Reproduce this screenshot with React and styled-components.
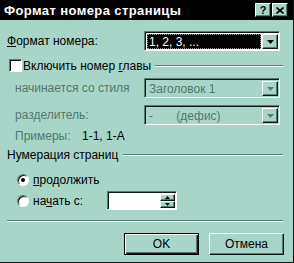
import React from 'react';
import styled, { createGlobalStyle, css } from 'styled-components';

const FACE = '#a7d6c8';
const SHADOW = '#567b73';
const DARK = '#0c1a17';
const LIGHT = '#ffffff';
const DISABLED = '#52766e';

const GlobalStyle = createGlobalStyle`
  html, body {
    margin: 0;
    padding: 0;
    background: ${FACE};
  }
  body {
    font-family: "Liberation Sans", Arial, sans-serif;
    font-size: 12px;
    color: #000;
  }
  * {
    box-sizing: border-box;
  }
`;

const raised = css`
  border: 1px solid;
  border-color: ${LIGHT} ${DARK} ${DARK} ${LIGHT};
  box-shadow: inset -1px -1px 0 ${SHADOW};
`;

const sunken = css`
  border: 1px solid;
  border-color: ${SHADOW} ${LIGHT} ${LIGHT} ${SHADOW};
  box-shadow: inset 1px 1px 0 ${DARK};
`;

const Window = styled.div`
  width: 294px;
  height: 263px;
  background: ${FACE};
  display: flex;
  flex-direction: column;
  border-right: 1px solid ${DARK};
  border-bottom: 1px solid ${DARK};
`;

const TitleBar = styled.div`
  height: 20px;
  flex-shrink: 0;
  background: #000;
  color: #fff;
  display: flex;
  align-items: center;
  padding: 0 5px 0 4px;
  font-family: "Liberation Sans", Arial, sans-serif;
  font-weight: bold;
  font-size: 13px;
  letter-spacing: 0.4px;
`;

const Title = styled.span`
  flex: 1;
  white-space: nowrap;
`;

const CaptionButton = styled.div`
  width: 16px;
  height: 14px;
  background: ${FACE};
  ${raised};
  display: flex;
  align-items: center;
  justify-content: center;
  color: #000;
  font-size: 11px;
  letter-spacing: 0;
  margin-left: ${p => p.$gap || 0}px;
`;

const Content = styled.div`
  flex: 1;
  padding: 0 9px 0 7px;
  display: flex;
  flex-direction: column;
`;

const Row = styled.div`
  display: flex;
  align-items: center;
  margin-top: ${p => p.$mt}px;
  height: ${p => p.$h}px;
  padding-left: ${p => p.$indent || 0}px;
`;

const Label = styled.span`
  width: ${p => (p.$w ? `${p.$w}px` : 'auto')};
  flex-shrink: 0;
  color: ${p => (p.$disabled ? DISABLED : '#000')};
  white-space: nowrap;
`;

const Combo = styled.div`
  width: 136px;
  height: 20px;
  ${sunken};
  padding: 2px 1px 1px 2px;
  display: flex;
  background: ${p => (p.$disabled ? FACE : LIGHT)};
`;

const ComboField = styled.div`
  flex: 1;
  display: flex;
  align-items: center;
  padding-left: 1px;
  white-space: nowrap;
  color: ${p => (p.$disabled ? DISABLED : '#fff')};
  background: ${p => (p.$selected ? '#000' : 'transparent')};
  border: 1px dotted ${p => (p.$selected ? 'rgba(255,255,255,0.6)' : 'transparent')};
  margin-right: 1px;
`;

const DropButton = styled.div`
  width: 16px;
  background: ${FACE};
  ${raised};
  display: flex;
  align-items: center;
  justify-content: center;
`;

const Groove = styled.div`
  flex: 1;
  height: 2px;
  border-top: 1px solid ${SHADOW};
  border-bottom: 1px solid ${LIGHT};
  margin-left: ${p => p.$ml || 0}px;
  margin-right: ${p => p.$mr || 0}px;
`;

const Separator = styled(Groove)`
  flex: none;
  margin-top: ${p => p.$mt}px;
`;

const Checkbox = styled.div`
  width: 13px;
  height: 13px;
  margin: 0 1px 0 2px;
  background: ${LIGHT};
  ${sunken};
`;

const Radio = styled.div`
  position: relative;
  width: 12px;
  height: 12px;
  margin-right: 4px;
  border-radius: 50%;
  background: ${LIGHT};
  border: 1px solid;
  border-color: ${SHADOW} ${LIGHT} ${LIGHT} ${SHADOW};
  box-shadow: inset 1px 1px 0 ${DARK};
  flex-shrink: 0;

  &::after {
    content: '';
    display: ${p => (p.$checked ? 'block' : 'none')};
    position: absolute;
    left: 3px;
    top: 3px;
    width: 4px;
    height: 4px;
    border-radius: 50%;
    background: #000;
  }
`;

const Key = styled.u`
  text-decoration: underline;
`;

const SpinBox = styled.div`
  width: 70px;
  height: 19px;
  ${sunken};
  background: ${LIGHT};
  padding: 2px 1px 1px 2px;
  display: flex;
  justify-content: flex-end;
`;

const SpinButtons = styled.div`
  width: 15px;
  display: flex;
  flex-direction: column;
`;

const SpinButton = styled.div`
  flex: 1;
  background: ${FACE};
  ${raised};
  display: flex;
  align-items: center;
  justify-content: center;
`;

const ButtonRow = styled.div`
  display: flex;
  justify-content: flex-end;
  gap: 10px;
  margin-top: 11px;
`;

const Button = styled.div`
  width: 75px;
  height: 22px;
  background: ${FACE};
  display: flex;
  align-items: center;
  justify-content: center;
  ${p =>
    p.$default
      ? css`
          border: 1px solid #000;
          box-shadow: inset 1px 1px 0 ${LIGHT}, inset -1px -1px 0 ${DARK},
            inset -2px -2px 0 ${SHADOW};
        `
      : raised};
`;

const Arrow = ({ color = '#000', up = false, w = 7, h = 4 }) => (
  <svg width={w} height={h} viewBox={`0 0 ${w} ${h}`}>
    <polygon
      points={up ? `0,${h} ${w},${h} ${w / 2},0` : `0,0 ${w},0 ${w / 2},${h}`}
      fill={color}
    />
  </svg>
);

export default function App() {
  return (
    <>
      <GlobalStyle />
      <Window>
        <TitleBar>
          <Title>Формат номера страницы</Title>
          <CaptionButton>
            <b>?</b>
          </CaptionButton>
          <CaptionButton $gap={1}>
            <svg width="8" height="7" viewBox="0 0 8 7">
              <path d="M0.5 0.5 L7.5 6.5 M7.5 0.5 L0.5 6.5" stroke="#000" strokeWidth="1.6" />
            </svg>
          </CaptionButton>
        </TitleBar>

        <Content>
          <Row $mt={11} $h={20}>
            <Label $w={137}>
              <Key>Ф</Key>ормат номера:
            </Label>
            <Combo>
              <ComboField $selected>1, 2, 3, ...</ComboField>
              <DropButton>
                <Arrow />
              </DropButton>
            </Combo>
          </Row>

          <Row $mt={8} $h={13}>
            <Checkbox />
            <Label>
              Включить номер <Key>г</Key>лавы
            </Label>
            <Groove $ml={4} $mr={1} />
          </Row>

          <Row $mt={6} $h={20} $indent={8}>
            <Label $w={129} $disabled>
              начинается со стиля
            </Label>
            <Combo $disabled>
              <ComboField $disabled>Заголовок 1</ComboField>
              <DropButton>
                <Arrow color={SHADOW} />
              </DropButton>
            </Combo>
          </Row>

          <Row $mt={7} $h={20} $indent={8}>
            <Label $w={129} $disabled>
              разделитель:
            </Label>
            <Combo $disabled>
              <ComboField $disabled>-&nbsp;&nbsp;&nbsp;&nbsp;&nbsp;&nbsp;&nbsp;(дефис)</ComboField>
              <DropButton>
                <Arrow color={SHADOW} />
              </DropButton>
            </Combo>
          </Row>

          <Row $mt={4} $h={14} $indent={8}>
            <Label $w={67} $disabled>
              Примеры:
            </Label>
            <Label>1-1, 1-А</Label>
          </Row>

          <Row $mt={5} $h={14}>
            <Label>Нумерация страниц</Label>
            <Groove $ml={5} $mr={1} />
          </Row>

          <Row $mt={11} $h={13} $indent={10}>
            <Radio $checked />
            <Label>
              <Key>п</Key>родолжить
            </Label>
          </Row>

          <Row $mt={5} $h={19} $indent={10}>
            <Radio />
            <Label $w={74}>
              на<Key>ч</Key>ать с:
            </Label>
            <SpinBox>
              <SpinButtons>
                <SpinButton>
                  <Arrow up w={5} h={3} />
                </SpinButton>
                <SpinButton>
                  <Arrow w={5} h={3} />
                </SpinButton>
              </SpinButtons>
            </SpinBox>
          </Row>

          <Separator $mt={10} $mr={1} />

          <ButtonRow>
            <Button $default>OK</Button>
            <Button>Отмена</Button>
          </ButtonRow>
        </Content>
      </Window>
    </>
  );
}
